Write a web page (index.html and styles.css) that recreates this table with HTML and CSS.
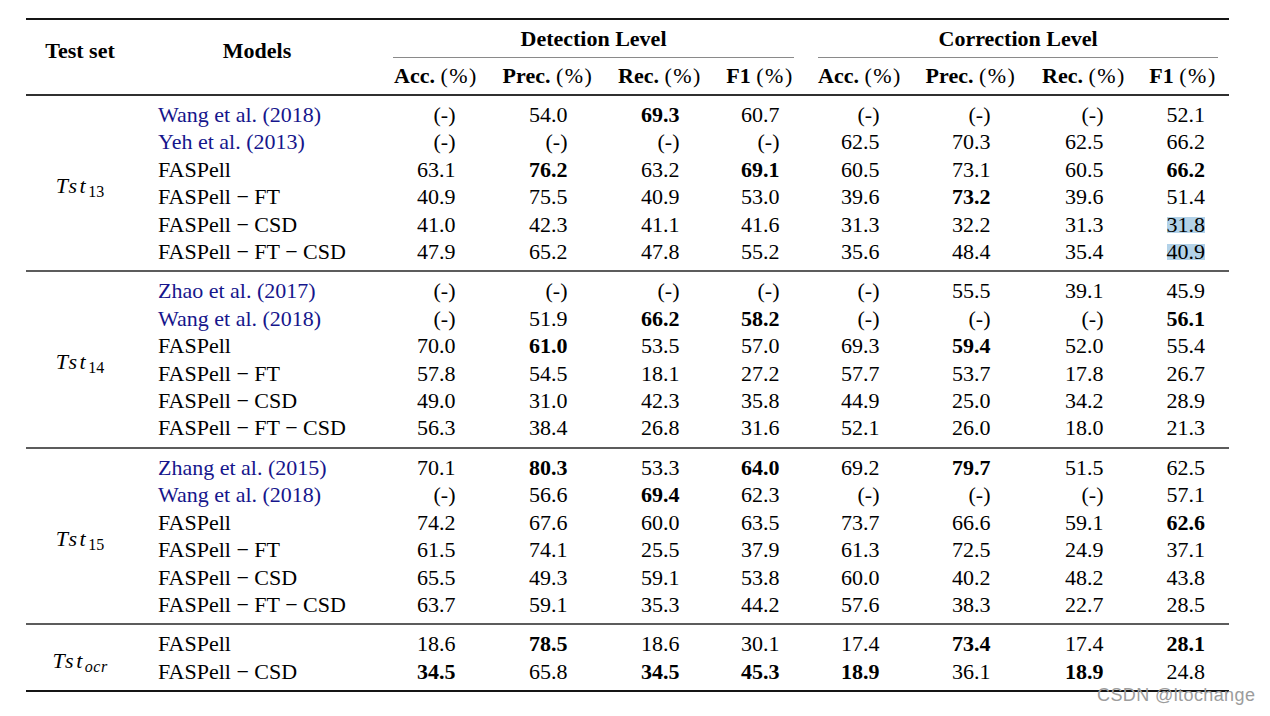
FILE: index.html
```html
<!DOCTYPE html>
<html>
<head>
<meta charset="utf-8">
<link rel="stylesheet" href="styles.css">
</head>
<body>
<table class="results">
  <colgroup>
    <col class="c-set"><col class="c-model">
    <col class="c-n"><col class="c-n"><col class="c-n"><col class="c-f1">
    <col class="c-n"><col class="c-n2"><col class="c-n3"><col class="c-f1b">
  </colgroup>
  <thead>
    <tr>
      <th rowspan="2" class="lift">Test set</th>
      <th rowspan="2" class="lift">Models</th>
      <th colspan="4" class="grp grp-d"><div class="cmid">Detection Level</div></th>
      <th colspan="4" class="grp grp-c"><div class="cmid">Correction Level</div></th>
    </tr>
    <tr class="sub">
      <th>Acc. <span class="pct">(%)</span></th>
      <th>Prec. <span class="pct">(%)</span></th>
      <th>Rec. <span class="pct">(%)</span></th>
      <th>F1 <span class="pct">(%)</span></th>
      <th>Acc. <span class="pct">(%)</span></th>
      <th>Prec. <span class="pct">(%)</span></th>
      <th>Rec. <span class="pct">(%)</span></th>
      <th class="last">F1 <span class="pct">(%)</span></th>
    </tr>
  </thead>
  <tbody>
    <tr>
      <td rowspan="6" class="set"><span class="tst">Tst</span><sub>13</sub></td>
      <td class="model cite">Wang et al. (2018)</td>
      <td><span class="n">(-)</span></td><td><span class="n">54.0</span></td><td><span class="n b">69.3</span></td><td><span class="n">60.7</span></td>
      <td><span class="n">(-)</span></td><td><span class="n">(-)</span></td><td><span class="n">(-)</span></td><td><span class="n">52.1</span></td>
    </tr>
    <tr>
      <td class="model cite">Yeh et al. (2013)</td>
      <td><span class="n">(-)</span></td><td><span class="n">(-)</span></td><td><span class="n">(-)</span></td><td><span class="n">(-)</span></td>
      <td><span class="n">62.5</span></td><td><span class="n">70.3</span></td><td><span class="n">62.5</span></td><td><span class="n">66.2</span></td>
    </tr>
    <tr>
      <td class="model">FASPell</td>
      <td><span class="n">63.1</span></td><td><span class="n b">76.2</span></td><td><span class="n">63.2</span></td><td><span class="n b">69.1</span></td>
      <td><span class="n">60.5</span></td><td><span class="n">73.1</span></td><td><span class="n">60.5</span></td><td><span class="n b">66.2</span></td>
    </tr>
    <tr>
      <td class="model">FASPell − FT</td>
      <td><span class="n">40.9</span></td><td><span class="n">75.5</span></td><td><span class="n">40.9</span></td><td><span class="n">53.0</span></td>
      <td><span class="n">39.6</span></td><td><span class="n b">73.2</span></td><td><span class="n">39.6</span></td><td><span class="n">51.4</span></td>
    </tr>
    <tr>
      <td class="model">FASPell − CSD</td>
      <td><span class="n">41.0</span></td><td><span class="n">42.3</span></td><td><span class="n">41.1</span></td><td><span class="n">41.6</span></td>
      <td><span class="n">31.3</span></td><td><span class="n">32.2</span></td><td><span class="n">31.3</span></td><td><span class="n"><span class="hl">31.8</span></span></td>
    </tr>
    <tr>
      <td class="model">FASPell − FT − CSD</td>
      <td><span class="n">47.9</span></td><td><span class="n">65.2</span></td><td><span class="n">47.8</span></td><td><span class="n">55.2</span></td>
      <td><span class="n">35.6</span></td><td><span class="n">48.4</span></td><td><span class="n">35.4</span></td><td><span class="n"><span class="hl">40.9</span></span></td>
    </tr>
  </tbody>
  <tbody>
    <tr>
      <td rowspan="6" class="set"><span class="tst">Tst</span><sub>14</sub></td>
      <td class="model cite">Zhao et al. (2017)</td>
      <td><span class="n">(-)</span></td><td><span class="n">(-)</span></td><td><span class="n">(-)</span></td><td><span class="n">(-)</span></td>
      <td><span class="n">(-)</span></td><td><span class="n">55.5</span></td><td><span class="n">39.1</span></td><td><span class="n">45.9</span></td>
    </tr>
    <tr>
      <td class="model cite">Wang et al. (2018)</td>
      <td><span class="n">(-)</span></td><td><span class="n">51.9</span></td><td><span class="n b">66.2</span></td><td><span class="n b">58.2</span></td>
      <td><span class="n">(-)</span></td><td><span class="n">(-)</span></td><td><span class="n">(-)</span></td><td><span class="n b">56.1</span></td>
    </tr>
    <tr>
      <td class="model">FASPell</td>
      <td><span class="n">70.0</span></td><td><span class="n b">61.0</span></td><td><span class="n">53.5</span></td><td><span class="n">57.0</span></td>
      <td><span class="n">69.3</span></td><td><span class="n b">59.4</span></td><td><span class="n">52.0</span></td><td><span class="n">55.4</span></td>
    </tr>
    <tr>
      <td class="model">FASPell − FT</td>
      <td><span class="n">57.8</span></td><td><span class="n">54.5</span></td><td><span class="n">18.1</span></td><td><span class="n">27.2</span></td>
      <td><span class="n">57.7</span></td><td><span class="n">53.7</span></td><td><span class="n">17.8</span></td><td><span class="n">26.7</span></td>
    </tr>
    <tr>
      <td class="model">FASPell − CSD</td>
      <td><span class="n">49.0</span></td><td><span class="n">31.0</span></td><td><span class="n">42.3</span></td><td><span class="n">35.8</span></td>
      <td><span class="n">44.9</span></td><td><span class="n">25.0</span></td><td><span class="n">34.2</span></td><td><span class="n">28.9</span></td>
    </tr>
    <tr>
      <td class="model">FASPell − FT − CSD</td>
      <td><span class="n">56.3</span></td><td><span class="n">38.4</span></td><td><span class="n">26.8</span></td><td><span class="n">31.6</span></td>
      <td><span class="n">52.1</span></td><td><span class="n">26.0</span></td><td><span class="n">18.0</span></td><td><span class="n">21.3</span></td>
    </tr>
  </tbody>
  <tbody>
    <tr>
      <td rowspan="6" class="set"><span class="tst">Tst</span><sub>15</sub></td>
      <td class="model cite">Zhang et al. (2015)</td>
      <td><span class="n">70.1</span></td><td><span class="n b">80.3</span></td><td><span class="n">53.3</span></td><td><span class="n b">64.0</span></td>
      <td><span class="n">69.2</span></td><td><span class="n b">79.7</span></td><td><span class="n">51.5</span></td><td><span class="n">62.5</span></td>
    </tr>
    <tr>
      <td class="model cite">Wang et al. (2018)</td>
      <td><span class="n">(-)</span></td><td><span class="n">56.6</span></td><td><span class="n b">69.4</span></td><td><span class="n">62.3</span></td>
      <td><span class="n">(-)</span></td><td><span class="n">(-)</span></td><td><span class="n">(-)</span></td><td><span class="n">57.1</span></td>
    </tr>
    <tr>
      <td class="model">FASPell</td>
      <td><span class="n">74.2</span></td><td><span class="n">67.6</span></td><td><span class="n">60.0</span></td><td><span class="n">63.5</span></td>
      <td><span class="n">73.7</span></td><td><span class="n">66.6</span></td><td><span class="n">59.1</span></td><td><span class="n b">62.6</span></td>
    </tr>
    <tr>
      <td class="model">FASPell − FT</td>
      <td><span class="n">61.5</span></td><td><span class="n">74.1</span></td><td><span class="n">25.5</span></td><td><span class="n">37.9</span></td>
      <td><span class="n">61.3</span></td><td><span class="n">72.5</span></td><td><span class="n">24.9</span></td><td><span class="n">37.1</span></td>
    </tr>
    <tr>
      <td class="model">FASPell − CSD</td>
      <td><span class="n">65.5</span></td><td><span class="n">49.3</span></td><td><span class="n">59.1</span></td><td><span class="n">53.8</span></td>
      <td><span class="n">60.0</span></td><td><span class="n">40.2</span></td><td><span class="n">48.2</span></td><td><span class="n">43.8</span></td>
    </tr>
    <tr>
      <td class="model">FASPell − FT − CSD</td>
      <td><span class="n">63.7</span></td><td><span class="n">59.1</span></td><td><span class="n">35.3</span></td><td><span class="n">44.2</span></td>
      <td><span class="n">57.6</span></td><td><span class="n">38.3</span></td><td><span class="n">22.7</span></td><td><span class="n">28.5</span></td>
    </tr>
  </tbody>
  <tbody class="final">
    <tr>
      <td rowspan="2" class="set"><span class="tst">Tst</span><sub class="ocr">ocr</sub></td>
      <td class="model">FASPell</td>
      <td><span class="n">18.6</span></td><td><span class="n b">78.5</span></td><td><span class="n">18.6</span></td><td><span class="n">30.1</span></td>
      <td><span class="n">17.4</span></td><td><span class="n b">73.4</span></td><td><span class="n">17.4</span></td><td><span class="n b">28.1</span></td>
    </tr>
    <tr>
      <td class="model">FASPell − CSD</td>
      <td><span class="n b">34.5</span></td><td><span class="n">65.8</span></td><td><span class="n b">34.5</span></td><td><span class="n b">45.3</span></td>
      <td><span class="n b">18.9</span></td><td><span class="n">36.1</span></td><td><span class="n b">18.9</span></td><td><span class="n">24.8</span></td>
    </tr>
  </tbody>
</table>
<div class="watermark">CSDN @ltochange</div>
</body>
</html>
```

FILE: styles.css
```css
html, body {
  margin: 0;
  padding: 0;
  background: #ffffff;
}

body {
  position: relative;
  width: 1270px;
  height: 716px;
  overflow: hidden;
  font-family: "Liberation Serif", "Times New Roman", serif;
  color: #000;
}

.results {
  margin: 18px 0 0 26px;
  width: 1203px;
  table-layout: fixed;
  border-collapse: collapse;
  font-size: 22px;
}

.c-set { width: 108px; }
.c-model { width: 246px; }
.c-n { width: 112px; }
.c-f1 { width: 88px; }
.c-n2 { width: 110px; }
.c-n3 { width: 116px; }
.c-f1b { width: 87px; }

thead {
  border-top: 2px solid #151515;
  border-bottom: 2px solid #303030;
}

th {
  font-weight: bold;
  padding: 0;
  text-align: center;
  line-height: 26px;
  white-space: nowrap;
}

th.lift {
  vertical-align: middle;
  padding-bottom: 12px;
}

.grp .cmid {
  padding: 6px 0 5px;
  line-height: 26px;
  border-bottom: 1.5px solid #8a8a8a;
}

.grp-d .cmid { margin: 0 10px 0 13px; }
.grp-c .cmid { margin: 0 11px 0 14px; }

tr.sub th {
  padding: 5px 0 5px;
}

tr.sub th.last {
  padding-right: 5px;
}

.pct {
  font-weight: normal;
  letter-spacing: 1.5px;
}

tbody + tbody {
  border-top: 2px solid #5c5c5c;
}

tbody.final {
  border-bottom: 2px solid #151515;
}

td {
  padding: 0;
  line-height: 27.4px;
  text-align: center;
  white-space: nowrap;
}

tbody tr:first-child td {
  padding-top: 5px;
}

tbody tr:last-child td {
  padding-bottom: 5px;
}

td.set {
  vertical-align: middle;
  padding-top: 2px;
  padding-bottom: 0;
}

.tst {
  font-style: italic;
  letter-spacing: 2.5px;
}

.set sub {
  font-size: 16px;
  vertical-align: -4px;
  line-height: 0;
}

.set sub.ocr {
  font-style: italic;
  letter-spacing: 0.5px;
}

td.model {
  text-align: left;
  padding-left: 24px;
}

td.model.cite {
  color: #16168c;
}

.n {
  display: inline-block;
  width: 39px;
  text-align: right;
}

.n.b {
  font-weight: bold;
}

.hl {
  background: linear-gradient(to bottom, transparent 5px, #b3d2e8 5px, #b3d2e8 21px, transparent 21px);
}

.watermark {
  position: absolute;
  left: 1097px;
  top: 686px;
  font-family: "Liberation Sans", Arial, sans-serif;
  font-size: 18px;
  line-height: 18px;
  letter-spacing: 0.4px;
  color: #9c9c9c;
  white-space: nowrap;
}
```
